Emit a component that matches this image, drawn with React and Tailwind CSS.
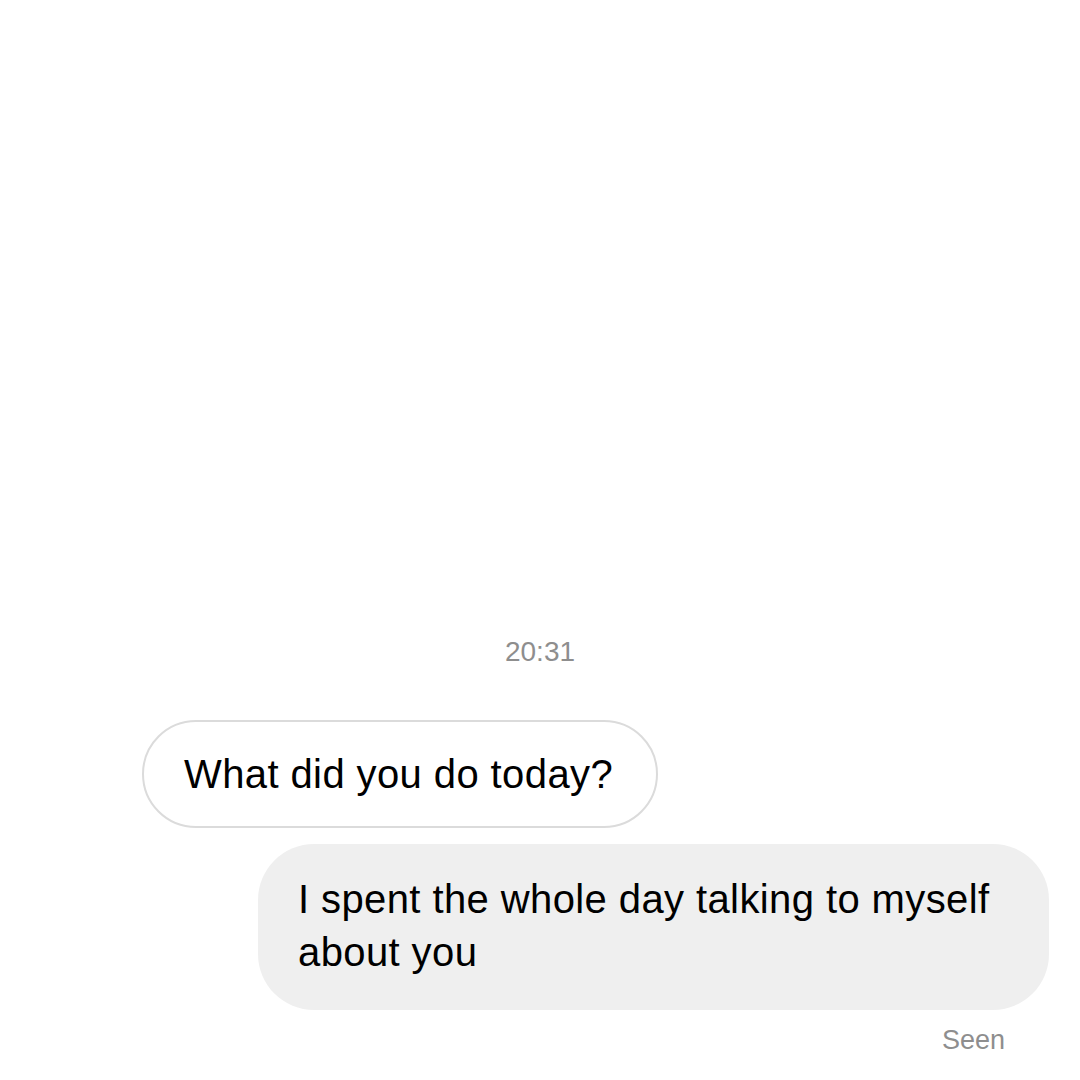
import React from "react";

const App = () => {
  return (
    <div
      className="w-[1080px] h-[1080px] bg-white flex flex-col overflow-hidden"
      style={{ fontFamily: "'Liberation Sans', Arial, sans-serif" }}
    >
      {/* timestamp */}
      <div className="mt-[634px] text-center text-[28px] leading-[36px] text-[#8e8e8e]">
        20:31
      </div>

      {/* incoming message */}
      <div className="mt-[50px] pl-[142px] flex">
        <div className="w-[516px] whitespace-nowrap border-2 border-[#dbdbdb] rounded-full px-[40px] py-[26px] text-[40px] leading-[52px] tracking-[0.4px] text-black">
          What did you do today?
        </div>
      </div>

      {/* outgoing message */}
      <div className="mt-[16px] pr-[31px] flex justify-end">
        <div className="w-[791px] bg-[#efefef] rounded-[56px] px-[40px] pt-[29px] pb-[31px] text-[40px] leading-[53px] tracking-[0.4px] text-black">
          I spent the whole day talking to myself about you
        </div>
      </div>

      <div className="mt-[13px] pr-[75px] text-right text-[27px] leading-[34px] text-[#8e8e8e]">
        Seen
      </div>
    </div>
  );
};

export default App;
